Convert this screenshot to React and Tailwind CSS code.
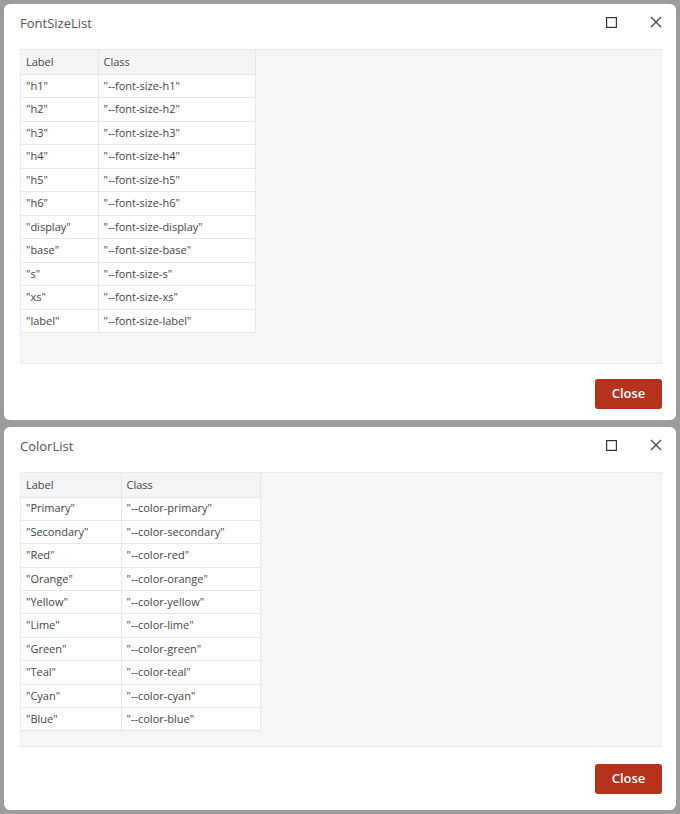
import React from "react";

const fontSizes = ["h1", "h2", "h3", "h4", "h5", "h6", "display", "base", "s", "xs", "label"];
const colors = ["Primary", "Secondary", "Red", "Orange", "Yellow", "Lime", "Green", "Teal", "Cyan", "Blue"];

/*  Window buttons  */
function WindowIcons() {
  return (
    <div className="flex items-center gap-[33px] pt-[2px]">
      <svg width="11" height="11" viewBox="0 0 11 11" className="text-[#333]">
        <rect x="0.6" y="0.6" width="9.8" height="9.8" fill="none" stroke="currentColor" strokeWidth="1.2" />
      </svg>
      <svg width="12" height="12" viewBox="0 0 12 12" className="text-[#444]">
        <path d="M1 1 11 11M11 1 1 11" stroke="currentColor" strokeWidth="1.3" fill="none" />
      </svg>
    </div>
  );
}

/*  Table  */
function ListTable({ rows, labelW, classW, rowH }) {
  return (
    <table className="border-collapse text-[11px] text-[#444]" style={{ width: labelW + classW }}>
      <thead>
        <tr className="bg-[#f4f5f6]">
          <th
            className="border-b border-r border-[#e3e5e7] px-[5px] text-left font-normal"
            style={{ width: labelW, height: 24 }}
          >
            Label
          </th>
          <th className="border-b border-r border-[#e3e5e7] px-[5px] text-left font-normal" style={{ height: 24 }}>
            Class
          </th>
        </tr>
      </thead>
      <tbody>
        {rows.map(([label, cls]) => (
          <tr key={label} className="bg-white">
            <td className="border-b border-r border-[#e6e8ea] px-[5px]" style={{ height: rowH }}>
              "{label}"
            </td>
            <td className="border-b border-r border-[#e6e8ea] px-[5px]" style={{ height: rowH }}>
              "{cls}"
            </td>
          </tr>
        ))}
      </tbody>
    </table>
  );
}

/*  Dialog  */
function Dialog({ title, className, children, footerClass }) {
  return (
    <div className={"flex flex-col rounded-[6px] bg-white pl-4 pr-[14px] " + className}>
      <div className="flex h-[45px] items-start justify-between pt-[10px]">
        <span className="text-[13px] text-[#555]">{title}</span>
        <WindowIcons />
      </div>
      <div className="flex-1 border border-[#e8eaec] bg-[#f5f6f7]">{children}</div>
      <div className={"flex justify-end " + footerClass}>
        <button className="h-[30px] w-[67px] rounded-[3px] bg-[#b5321c] text-[13px] font-semibold text-white">
          Close
        </button>
      </div>
    </div>
  );
}

export default function App() {
  return (
    <div
      className="flex h-[814px] w-[680px] flex-col gap-[7px] overflow-hidden bg-[#9d9d9d] px-[4px] pt-[4px]"
      style={{ fontFamily: '"Open Sans", "Noto Sans", sans-serif' }}
    >
      <Dialog title="FontSizeList" className="h-[416px]" footerClass="pt-[15px] pb-[11px]">
        <ListTable
          rows={fontSizes.map((s) => [s, "--font-size-" + s])}
          labelW={77}
          classW={158}
          rowH={23.5}
        />
      </Dialog>
      <Dialog title="ColorList" className="h-[383px]" footerClass="pt-[17px] pb-[16px]">
        <ListTable
          rows={colors.map((c) => [c, "--color-" + c.toLowerCase()])}
          labelW={100}
          classW={140}
          rowH={23.4}
        />
      </Dialog>
    </div>
  );
}
